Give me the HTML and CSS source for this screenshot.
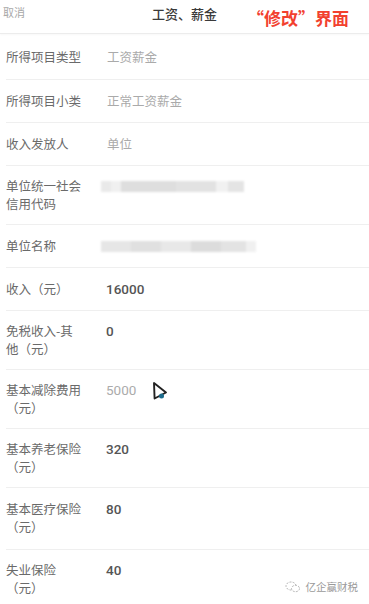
FILE: index.html
```html
<!DOCTYPE html>
<html lang="zh-CN">
<head>
<meta charset="utf-8">
<title>工资、薪金</title>
<link rel="stylesheet" href="styles.css">
</head>
<body>
<div class="page">
  <header class="header">
    <span class="cancel">取消</span>
    <span class="title">工资、薪金</span>
    <span class="note">“修改”界面</span>
  </header>
  <div class="list">
    <div class="row first"><div class="label">所得项目类型</div><div class="value muted">工资薪金</div></div>
    <div class="row"><div class="label">所得项目小类</div><div class="value muted">正常工资薪金</div></div>
    <div class="row"><div class="label">收入发放人</div><div class="value muted">单位</div></div>
    <div class="row double"><div class="label">单位统一社会信用代码</div><div class="value"><div class="blur b1"><i></i><i></i><i></i><i></i><i></i><i></i></div></div></div>
    <div class="row"><div class="label">单位名称</div><div class="value"><div class="blur b2"><i></i><i></i><i></i><i></i><i></i><i></i></div></div></div>
    <div class="row"><div class="label">收入（元）</div><div class="value num">16000</div></div>
    <div class="row double"><div class="label">免税收入-其他（元）</div><div class="value num">0</div></div>
    <div class="row double cursor-row"><div class="label">基本减除费用（元）</div><div class="value num muted">5000</div>
      <svg class="cursor" width="17" height="20" viewBox="0 0 17 20"><path d="M2 2 L2.6 17.5 L14 11.5 Z" fill="#fff" stroke="#222" stroke-width="1.9" stroke-linejoin="round"/><circle cx="9.5" cy="15" r="2.5" fill="#1b6b8c"/></svg>
    </div>
    <div class="row double"><div class="label">基本养老保险（元）</div><div class="value num">320</div></div>
    <div class="row double tall"><div class="label">基本医疗保险（元）</div><div class="value num">80</div></div>
    <div class="row double last"><div class="label">失业保险<br>（元）</div><div class="value num">40</div></div>
  </div>
  <div class="watermark">
    <svg width="16" height="12" viewBox="0 0 16 12"><ellipse cx="6" cy="5" rx="5" ry="4" fill="none" stroke="#aaa" stroke-width="0.9" stroke-dasharray="2 1.2"/><ellipse cx="10.5" cy="7.5" rx="4" ry="3.2" fill="#fff" stroke="#aaa" stroke-width="0.9" stroke-dasharray="2 1.2"/></svg>
    <span>亿企赢财税</span>
  </div>
</div>
</body>
</html>
```

FILE: styles.css
```css
html, body {
  margin: 0;
  padding: 0;
  background: #fff;
}
body {
  font-family: "Noto Sans CJK SC", "Noto Sans", sans-serif;
  width: 369px;
  height: 604px;
  overflow: hidden;
}
.page {
  position: relative;
  width: 369px;
  height: 604px;
  overflow: hidden;
}
.header {
  display: grid;
  grid-template-columns: 1fr auto 1fr;
  align-items: center;
  height: 33px;
  border-bottom: 1px solid #ececec;
  box-shadow: 0 1px 2px rgba(0,0,0,0.03);
}
.cancel {
  font-size: 11px;
  color: #a8a8a8;
  padding-left: 3px;
  align-self: start;
  margin-top: 4px;
}
.title {
  font-size: 13px;
  font-weight: 500;
  color: #3a3a3a;
  align-self: start;
  margin-top: 4px;
}
.note {
  justify-self: start;
  margin-left: 30px;
  font-size: 17px;
  font-weight: 700;
  color: #f2412f;
  margin-top: 2px;
}
.list {
  display: flex;
  flex-direction: column;
}
.row {
  position: relative;
  display: flex;
  align-items: flex-start;
  margin-left: 6px;
  padding: 12px 0;
  border-bottom: 1px solid #efefef;
  line-height: 18px;
}
.row.first {
  padding: 14px 0 13px;
}
.row.double {
  padding: 11px 0 11px;
}
.row.double.tall {
  padding: 12px 0 13px;
}
.row.last {
  border-bottom: none;
}
.label {
  width: 77px;
  flex: none;
  font-size: 12.5px;
  color: #6a6a6a;
}
.value {
  margin-left: 24px;
  font-size: 12.5px;
  color: #444;
}
.value.muted {
  color: #aaa;
}
.value.num {
  font-family: "Roboto", "Noto Sans", sans-serif;
  font-size: 13.5px;
  font-weight: 500;
  color: #555;
  margin-left: 23px;
}
.value.num.muted {
  color: #ababab;
  font-weight: 400;
}
.blur {
  display: flex;
  height: 11px;
  margin-top: 4px;
  margin-left: -6px;
  filter: blur(0.8px);
}
.blur i {
  display: block;
  height: 100%;
}
.b1 i:nth-child(1) { width: 10px; background: #e9e9e9; }
.b1 i:nth-child(2) { width: 10px; background: #f0f0f0; }
.b1 i:nth-child(3) { width: 55px; background: #dedede; }
.b1 i:nth-child(4) { width: 40px; background: #e2e2e2; }
.b1 i:nth-child(5) { width: 12px; background: #f1f1f1; }
.b1 i:nth-child(6) { width: 16px; background: #e4e4e4; }
.b2 i:nth-child(1) { width: 30px; background: #e6e6e6; }
.b2 i:nth-child(2) { width: 30px; background: #e0e0e0; }
.b2 i:nth-child(3) { width: 30px; background: #e8e8e8; }
.b2 i:nth-child(4) { width: 30px; background: #dcdcdc; }
.b2 i:nth-child(5) { width: 25px; background: #e3e3e3; }
.b2 i:nth-child(6) { width: 10px; background: #f0f0f0; }
.cursor {
  position: absolute;
  left: 146px;
  top: 11px;
}
.watermark {
  position: absolute;
  right: 11px;
  bottom: 10px;
  display: flex;
  align-items: center;
  gap: 5px;
  font-size: 10.5px;
  color: #9a9a9a;
}
```
